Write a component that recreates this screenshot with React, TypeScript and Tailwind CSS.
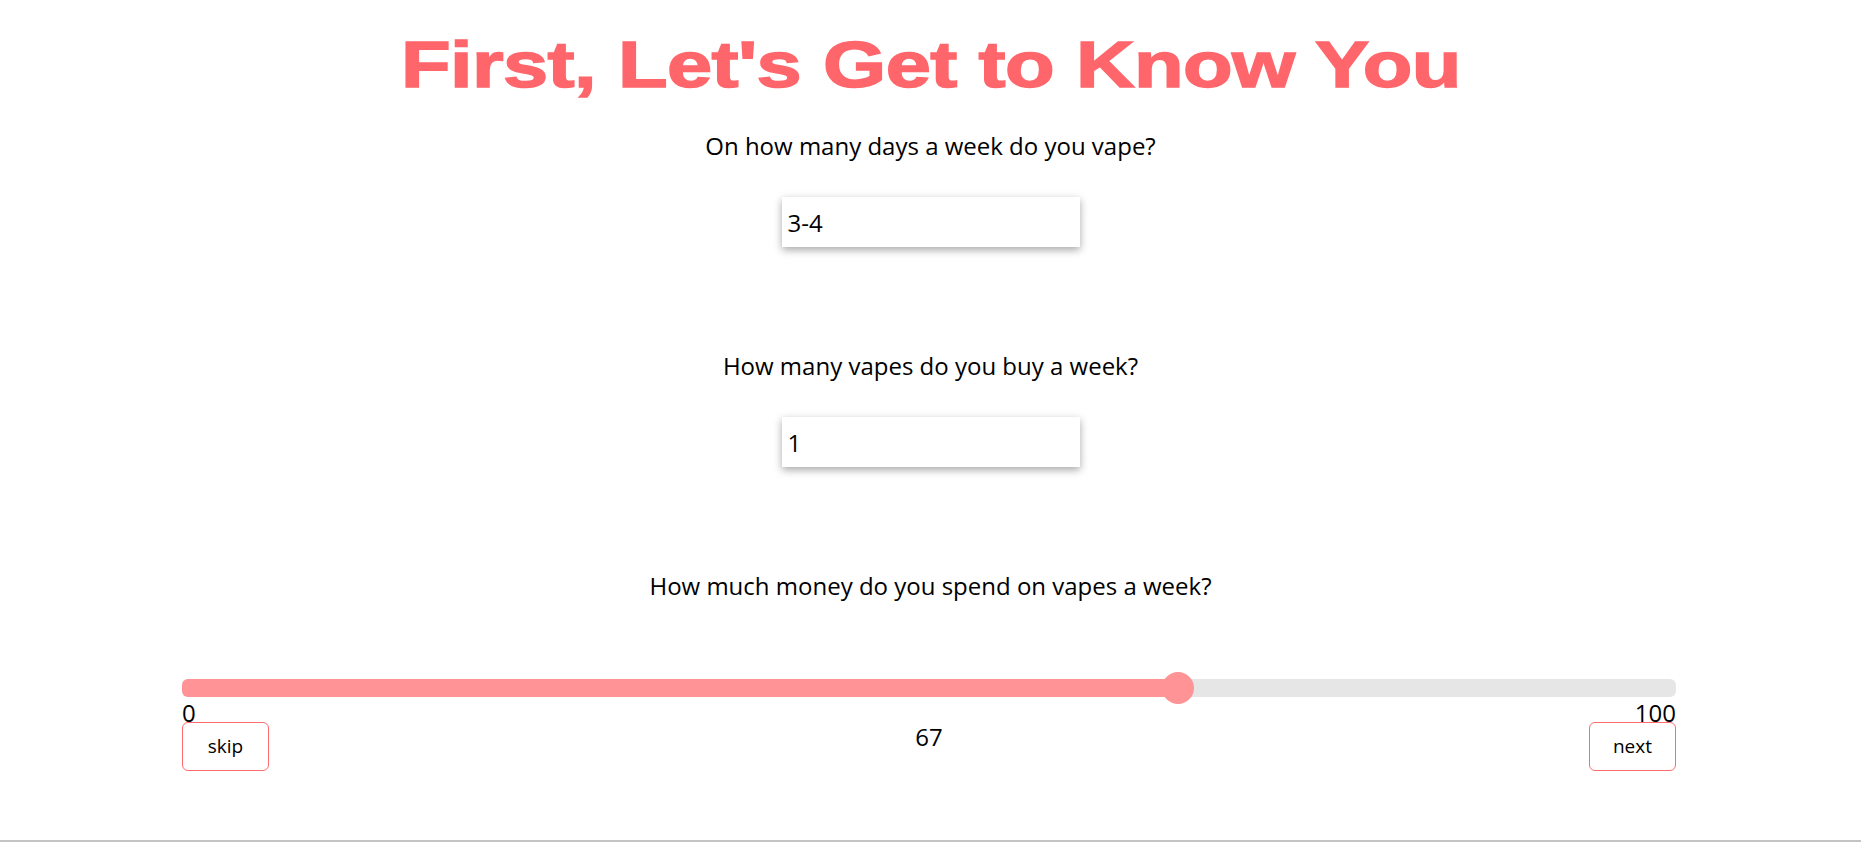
import React, { useState } from "react";

const body = "font-['Open_Sans',sans-serif]";

const Question = ({ label, value }: { label: string; value: string }) => {
  const [v, setV] = useState(value);
  return (
    <div className="flex flex-col items-center">
      <p className={`${body} text-[24px] leading-[33px] text-black`}>{label}</p>
      <input
        type="text"
        value={v}
        onChange={(e) => setV(e.target.value)}
        className={`${body} mt-[35px] w-[298px] h-[50px] bg-white pl-[6px] text-[24px] text-black outline-none shadow-[0_3px_8px_rgba(0,0,0,0.35)]`}
      />
    </div>
  );
};

const App = () => {
  const [money] = useState(67);
  // thumb travels inside the track like a native range input
  const thumbPos = `calc(16px + (100% - 32px) * ${money / 100})`;

  return (
    <div className="h-[842px] w-full bg-white border-b-2 border-[#c4c4c4] box-border overflow-hidden">
      <div className="flex justify-center pt-[32px]">
        <h1 className="inline-block origin-center scale-x-[1.25] font-['Liberation_Sans',sans-serif] font-black text-[65px] leading-none text-[#ff666b] tracking-[-0.5px] [-webkit-text-stroke:1.5px_#ff666b]">
          First, Let's Get to Know You
        </h1>
      </div>

      <div className="mt-[32px] flex flex-col gap-[102px]">
        <Question label="On how many days a week do you vape?" value="3-4" />
        <Question label="How many vapes do you buy a week?" value="1" />
      </div>

      <p className={`${body} mt-[102px] text-center text-[24px] leading-[33px] text-black`}>
        How much money do you spend on vapes a week?
      </p>

      <div className={`${body} ml-[182px] w-[1494px] mt-[77px]`}>
        <div className="relative h-[18px] rounded-[6px] bg-[#e6e6e6]">
          <div
            className="h-full rounded-l-[6px] bg-[#ff9396]"
            style={{ width: thumbPos }}
          />
          <div
            className="absolute top-1/2 h-[32px] w-[32px] -translate-x-1/2 -translate-y-1/2 rounded-full bg-[#ff9396]"
            style={{ left: thumbPos }}
          />
        </div>
        <div className="mt-[7px] flex justify-between text-[24px] leading-[18px] text-black">
          <span>0</span>
          <span>100</span>
        </div>
        <div className="flex items-start justify-between">
          <button className="h-[49px] w-[87px] rounded-[6px] border border-[#ff6b6f] bg-white text-[19px] text-black">
            skip
          </button>
          <div className="pt-[2px] text-[24px] leading-[26px] text-black">{money}</div>
          <button className="h-[49px] w-[87px] rounded-[6px] border border-[#ff6b6f] bg-white text-[19px] text-black">
            next
          </button>
        </div>
      </div>
    </div>
  );
};

export default App;
